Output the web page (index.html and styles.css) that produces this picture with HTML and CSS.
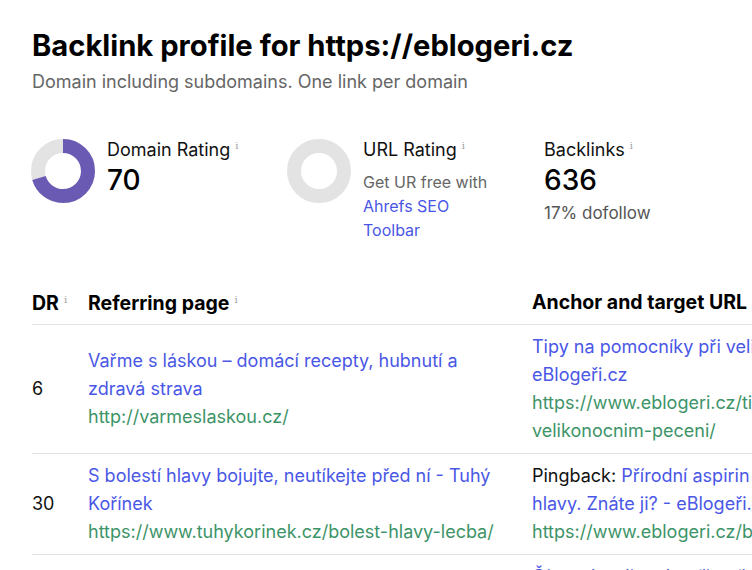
FILE: index.html
```html
<!DOCTYPE html>
<html lang="cs">
<head>
<meta charset="utf-8">
<title>Backlink profile</title>
<link rel="stylesheet" href="styles.css">
</head>
<body>
<main class="page">
  <h1 class="title">Backlink profile for https://eblogeri.cz</h1>
  <p class="subtitle">Domain including subdomains. One link per domain</p>

  <section class="stats">
    <div class="stat">
      <svg class="donut" width="64" height="64" viewBox="0 0 64 64">
        <circle cx="32" cy="32" r="25" fill="none" stroke="#e3e3e3" stroke-width="14"/>
        <circle cx="32" cy="32" r="25" fill="none" stroke="#6a5ab4" stroke-width="14" stroke-dasharray="109.96 157.08" transform="rotate(-90 32 32)"/>
      </svg>
      <div class="stat-text">
        <div class="stat-label">Domain Rating<span class="info">i</span></div>
        <div class="stat-value">70</div>
      </div>
    </div>
    <div class="stat">
      <svg class="donut" width="64" height="64" viewBox="0 0 64 64">
        <circle cx="32" cy="32" r="25" fill="none" stroke="#e3e3e3" stroke-width="14"/>
      </svg>
      <div class="stat-text narrow">
        <div class="stat-label">URL Rating<span class="info">i</span></div>
        <div class="stat-note">Get UR free with <a class="link" href="#">Ahrefs SEO Toolbar</a></div>
      </div>
    </div>
    <div class="stat">
      <div class="stat-text">
        <div class="stat-label">Backlinks<span class="info">i</span></div>
        <div class="stat-value">636</div>
        <div class="stat-sub">17% dofollow</div>
      </div>
    </div>
  </section>

  <div class="table-wrap">
    <table class="links">
      <colgroup>
        <col class="c-dr">
        <col class="c-ref">
        <col class="c-anchor">
      </colgroup>
      <thead>
        <tr>
          <th>DR<span class="info">i</span></th>
          <th>Referring page<span class="info">i</span></th>
          <th>Anchor and target URL</th>
        </tr>
      </thead>
      <tbody>
        <tr>
          <td>6</td>
          <td><a class="link" href="#">Vařme s láskou – domácí recepty, hubnutí a zdravá strava</a><br><span class="url">http://varmeslaskou.cz/</span></td>
          <td><a class="link" href="#">Tipy na pomocníky při velikonočním pečení - eBlogeři.cz</a><br><span class="url">https://www.eblogeri.cz/tipy-na-pomocniky-pri-velikonocnim-peceni/</span></td>
        </tr>
        <tr>
          <td>30</td>
          <td><a class="link" href="#">S bolestí hlavy bojujte, neutíkejte před ní - Tuhý Kořínek</a><br><span class="url">https://www.tuhykorinek.cz/bolest-hlavy-lecba/</span></td>
          <td>Pingback: <a class="link" href="#">Přírodní aspirin účinný proti bolesti hlavy. Znáte ji? - eBlogeři.cz</a><br><span class="url">https://www.eblogeri.cz/bolest-hlavy/</span></td>
        </tr>
        <tr>
          <td>12</td>
          <td><a class="link" href="#">Zdravé bydlení a život</a><br><span class="url">https://www.zdravebydleni.cz/</span></td>
          <td><a class="link" href="#">Čím nahradit cukr při pečení a vaření, aby byl výsledek zdravější - eBlogeři.cz</a><br><span class="url">https://www.eblogeri.cz/cim-nahradit-cukr-pri-peceni-a-vareni/</span></td>
        </tr>
      </tbody>
    </table>
  </div>
</main>
</body>
</html>
```

FILE: styles.css
```css
html, body {
  margin: 0;
  padding: 0;
  overflow: hidden;
  background: #ffffff;
}

body {
  font-family: Inter, "Noto Sans", "Liberation Sans", sans-serif;
  color: #111111;
  font-size: 18px;
}

.page {
  padding: 28px 0 0 32px;
  width: 1000px;
}

.title {
  margin: 0;
  font-size: 29.2px;
  line-height: 36px;
  font-weight: 700;
  color: #000000;
  letter-spacing: 0;
}

.subtitle {
  margin: 6px 0 0;
  font-size: 18px;
  line-height: 24px;
  color: #666666;
}

.stats {
  display: grid;
  grid-template-columns: 256px 257px 256px;
  margin-top: 40px;
  margin-left: -1px;
}

.stat {
  display: flex;
  align-items: flex-start;
  gap: 12px;
}

.donut {
  flex: none;
  margin-top: 5px;
}

.stat-text {
  display: flex;
  flex-direction: column;
}

.stat-text.narrow {
  width: 140px;
}

.stat-label {
  font-size: 18px;
  line-height: 24px;
  color: #111111;
}

.stat-value {
  font-size: 28px;
  line-height: 36px;
  color: #000000;
  font-weight: 500;
}

.stat-note {
  margin-top: 8px;
  font-size: 16px;
  line-height: 24px;
  color: #666666;
}

.stat-sub {
  margin-top: 3px;
  font-size: 17px;
  line-height: 24px;
  color: #555555;
}

.info {
  font-family: "DejaVu Serif", serif;
  font-size: 10px;
  color: #a0a0a0;
  vertical-align: 7px;
  margin-left: 5px;
  font-weight: 400;
}

.link {
  color: #4a57e6;
  text-decoration: none;
}

.url {
  color: #3d9468;
}

.table-wrap {
  margin-top: 36px;
}

.links {
  border-collapse: collapse;
  table-layout: fixed;
  width: 944px;
}

.c-dr { width: 56px; }
.c-ref { width: 444px; }
.c-anchor { width: 444px; }

.links th {
  text-align: left;
  font-weight: 700;
  font-size: 19.5px;
  line-height: 28px;
  color: #000000;
  padding: 8px 24px 7px 0;
  border-bottom: 1px solid #e2e2e2;
}

.links td {
  font-size: 18px;
  line-height: 28px;
  padding: 8px 24px 8px 0;
  vertical-align: middle;
  border-bottom: 1px solid #e2e2e2;
}
```
